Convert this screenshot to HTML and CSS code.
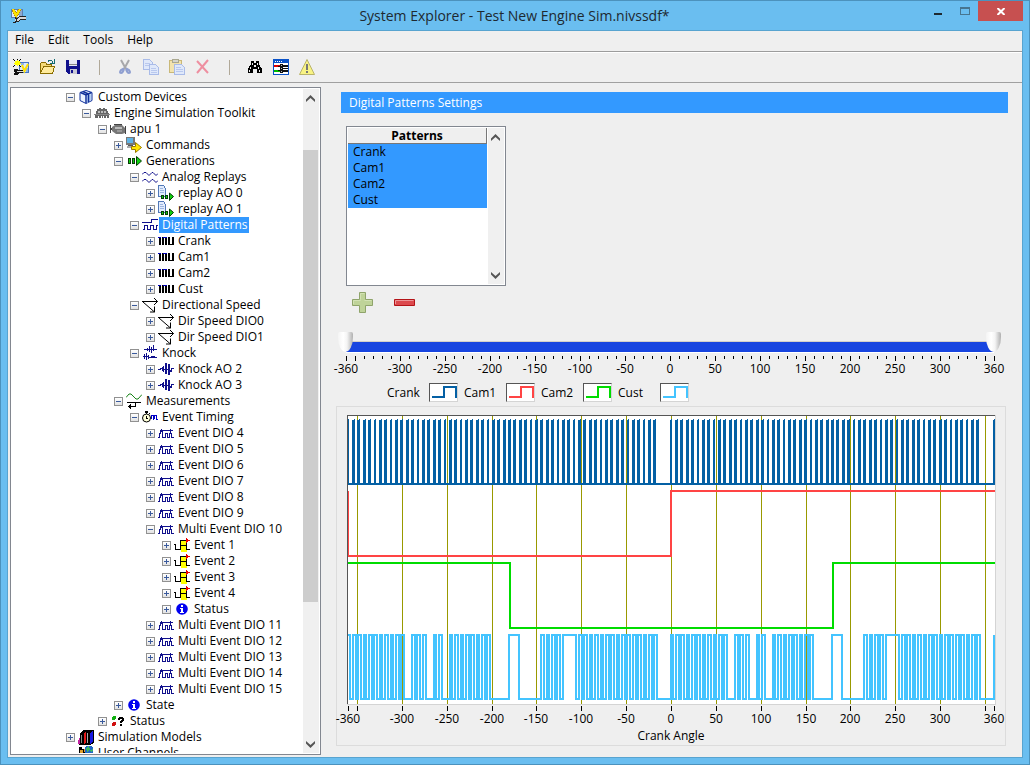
FILE: index.html
```html
<!DOCTYPE html>
<html lang="en">
<head>
<meta charset="utf-8">
<title>System Explorer - Test New Engine Sim.nivssdf*</title>
<link rel="stylesheet" href="styles.css">
</head>
<body>
<svg class="defs" aria-hidden="true">
  <symbol id="i-app" viewBox="0 0 16 16"><path fill="#5b7fb5" d="M1 1h12v9H1z"/><path fill="#dfe7f2" d="M2 2h10v7H2z"/><path fill="#8ea9cf" d="M9 2h3v7H9z"/><path fill="none" stroke="#b08a10" stroke-width="3" d="M3 1l3 7 4-7"/><path fill="none" stroke="#ffe100" stroke-width="2" d="M3 1l3 7 4-7"/><path fill="none" stroke="#222" stroke-width="4" d="M5 12h3l2-2h6"/><path fill="none" stroke="#d8d8d8" stroke-width="2" d="M5 12h3l2-2h6"/><path fill="none" stroke="#222" d="M5 9l2 2-1 3-3 1"/></symbol>
  <symbol id="i-new" viewBox="0 0 16 16"><path fill="#4a76c4" d="M6 3h10v11H6z"/><path fill="#dce9fb" d="M7 4h8v9H7z"/><path fill="#8fb3ea" d="M8 4h3v2H8zM13 9h2v4h-2z"/><path fill="none" stroke="#ffe100" stroke-width="2" shape-rendering="auto" d="M9 6l2.500 6L15 5"/><path d="M0 0h1v1H0zM1 1h1v1H1zM7 0h1v1H7zM6 1h1v1H6zM0 7h1v1H0zM1 6h1v1H1zM7 7h1v1H7zM6 6h1v1H6zM4 0h1v1H4z"/><path fill="#ff0" d="M2 2h5v4H2zM4 1h1v6H4zM1 4h7v1H1z"/><path fill="none" stroke="#111" stroke-width="3" d="M1 11h2l2 1h5M1 15h2l2-2"/><path fill="none" stroke="#ddd" d="M4 12.500h6"/></symbol>
  <symbol id="i-open" viewBox="0 0 16 16"><path fill="#f4da78" stroke="#8a6d00" d="M1.500 13.500V4.500l1-1h4l1 1.500h5v8.500z"/><path fill="#ffeb9c" stroke="#8a6d00" d="M1.500 14.500l3-7h11l-2 7z"/><path fill="none" stroke="#146b73" d="M9 2.500q3-3 5 1M15.500 0v4.500H11"/></symbol>
  <symbol id="i-save" viewBox="0 0 16 16"><path fill="#10108c" d="M1 1h14v14H3l-2-2z"/><path fill="#e8e8f4" d="M4 1h8v6H4z"/><path fill="#888" d="M4 5h8v1H4z"/><path fill="#c8c8d4" d="M5 10h7v5H5z"/><path fill="#10108c" d="M6 11h2v3H6z"/></symbol>
  <symbol id="i-cut" viewBox="0 0 16 16"><g fill="none" shape-rendering="auto"><path stroke="#a7a7aa" stroke-width="2" d="M4 1l5 9M12 1L7 10"/><path stroke="#8f9fd0" stroke-width="2" d="M7 9.500L4 11q-2 3 0 3t3-4M9 9.500l3 1.500q2 3 0 3t-3-4"/></g></symbol>
  <symbol id="i-copy" viewBox="0 0 16 16"><g fill="#dfe8fa" stroke="#a9bbe8"><path d="M.5.500h6l3 3v7h-9z"/><path d="M6.500 5.500h6l3 3v7h-9z"/></g><path stroke="#b9c8ee" d="M2 4.500h5M2 6.500h4M8 9.500h5M8 11.500h6M8 13.500h6"/></symbol>
  <symbol id="i-paste" viewBox="0 0 16 16"><rect x=".5" y="1.500" width="12" height="12" rx="1" fill="#f2e3ae" stroke="#c9b878"/><path fill="#d5d5cc" stroke="#aaa890" d="M3.500.500h6v3h-6z"/><path fill="#dfe8fa" stroke="#a9bbe8" d="M5.500 5.500h7l3 3v7h-10z"/><path stroke="#b9c8ee" d="M7 8.500h5M7 10.500h7M7 12.500h7"/></symbol>
  <symbol id="i-delete" viewBox="0 0 16 16"><path stroke="#ee8fa0" stroke-width="2" shape-rendering="auto" d="M2 2l11 12M13 1L2 14"/></symbol>
  <symbol id="i-find" viewBox="0 0 16 16"><path d="M4 2h3v2h2V2h3v3l3 5v4h-5v-4H6v4H1v-4l3-5z"/><path fill="#efefef" d="M5 4h1v2H5zM10 4h1v2h-1zM3 8h1v2H3zM11 8h1v2h-1zM2 11h1v2H2zM12 11h1v2h-1zM7 6h2v2H7z"/></symbol>
  <symbol id="i-map" viewBox="0 0 16 16"><path fill="#0a52c8" d="M0 0h16v16H0z"/><path fill="#fff" d="M1 4h14v11H1zM2 2h1v1H2zM4 2h1v1H4zM6 2h1v1H6zM8 2h1v1H8z"/><path fill="#d00" d="M1 6h6v2H1z"/><path fill="#0b0" d="M1 11h6v2H1z"/><path fill="#111" d="M7 5h3v1h5v2h-5v1h5v1h-5v1h5v2h-5v1H7v-2H5v-1h2V8H5V7h2z"/><path fill="#bbb" d="M8 6h1v1H8zM8 9h1v1H8zM8 12h1v1H8z"/></symbol>
  <symbol id="i-warn" viewBox="0 0 16 16"><path fill="#f8f383" stroke="#b9b36a" stroke-linejoin="round" shape-rendering="auto" d="M8 .500L15.500 15.500H.500z"/><path fill="#777" d="M7 5h2v6H7zM7 12h2v2H7z"/></symbol>

  <symbol id="i-cube" viewBox="0 0 16 16"><g shape-rendering="auto"><path fill="#eaf2ff" stroke="#10309a" d="M8 1.500l6 2v8L8 14.500l-6-3v-8z"/><path fill="#b4d0f4" d="M9 7l4-2v6l-4 3z"/><path fill="none" stroke="#10309a" stroke-width="1.500" d="M2.500 3.500L8 6l5.500-2.500M8 6v8M5 2.500l5.500 2.500v8"/></g></symbol>
  <symbol id="i-engine" viewBox="0 0 16 16"><path fill="#666" d="M3 4h2V3h2v1h2V3h2v1h2v2h1v2h1v5h-2v-2h-1v2h-2v-2h-1v2H8v-2H7v2H5v-2H4v2H1V9h1V6h1z"/><path fill="#bbb" d="M4 6h2v2H4zM7 6h2v2H7zM10 6h2v2h-2z"/><path fill="#888" d="M0 9h16v1H0z"/></symbol>
  <symbol id="i-motor" viewBox="0 0 16 16"><path fill="#444" d="M0 4h1v8H0zM1 7h2v2H1zM4 3h8v1H4zM15 5h1v8h-1z"/><path fill="#777" shape-rendering="auto" d="M2 6l3-2h7l3 3v5l-3 1H6l-4-3z"/><path fill="#bbb" d="M5 6h7v2H5z"/><path fill="#999" d="M7 9h5v2H7z"/></symbol>
  <symbol id="i-cmd" viewBox="0 0 16 16"><path fill="#777" d="M0 0h9v8H0z"/><path fill="#5fb4e6" d="M1 1h6v5H1z"/><path fill="#555" d="M2 8h5v1H2z"/><path fill="#aaa" d="M1 9h5v2H1z"/><path fill="#ffe600" stroke="#9a7a00" shape-rendering="auto" d="M5.500 9.500h4V5.500l6 5-6 5v-3h-4z"/></symbol>
  <symbol id="i-gen" viewBox="0 0 16 16"><g fill="#10d010" stroke="#063c06"><path d="M2.500 5.500h2v5h-2zM6.500 5.500h2v5h-2z"/><path shape-rendering="auto" d="M10.500 3.500l5 4.500-5 4.500z"/></g></symbol>
  <symbol id="i-analog" viewBox="0 0 16 16"><path fill="none" stroke="#10108c" shape-rendering="auto" d="M0 5.500l2-2h2l3 3 3-3h1l3 3 2-2M0 12.500l2-2h2l3 3 3-3h1l3 3 2-2"/></symbol>
  <symbol id="i-replay" viewBox="0 0 16 16"><path fill="#e2ecfc" stroke="#5078b8" d="M.5.500h5l2 3v8h-7z"/><path stroke="#9cb6e0" d="M2 3.500h3M2 5.500h4M2 7.500h4"/><g fill="#10d010" stroke="#063c06"><path d="M3.500 10.500h2v3h-2zM7.500 10.500h2v3h-2z"/><path shape-rendering="auto" d="M11.500 8l4 3.500-4 4z"/></g></symbol>
  <symbol id="i-digital" viewBox="0 0 16 16"><path fill="none" stroke="#10108c" d="M0 5.500h9.500v-3H16M1 12.500h1.500v-4h3v4h3v-4h3v4h3v-4H16"/></symbol>
  <symbol id="i-wave" viewBox="0 0 16 16"><path d="M0 4h3v8H1V5H0zM4 4h5v8H7V5H6v7H4zM10 4h2v7h2V4h2v8h-6z"/><path fill="#0000b8" d="M0 4h3v1H0zM5 4h4v1H5z"/></symbol>
  <symbol id="i-dir" viewBox="0 0 16 16"><g fill="none" stroke="#000" shape-rendering="auto"><path d="M0 4.500h15.500M12 1l3.500 3.500L12 8M1 5l11.500 10"/><path d="M12.500 9.500v5.500H8"/></g></symbol>
  <symbol id="i-knocks" viewBox="0 0 16 16"><path fill="#10108c" d="M2 4h13v1H2zM5 3h1v3H5zM7 1h1v6H7zM9 2h1v6H9zM11 0h1v6h-1zM1 11h6v1H1zM2 9h1v5H2zM4 8h1v7H4zM6 10h1v4H6zM7 12h8v1H7zM9 11h4v1H9z"/></symbol>
  <symbol id="i-knock" viewBox="0 0 16 16"><path fill="#10108c" d="M0 8h3v1H0zM2 7h2v1H2zM4 6h1v4H4zM5 5h1v6H5zM6 8h6v1H6zM7 2h2v11H7zM10 3h2v11h-2zM12 9h2v2h-2zM13 7h1v3h-1zM14 7h2v1h-2z"/></symbol>
  <symbol id="i-meas" viewBox="0 0 16 16"><path fill="none" stroke="#178217" shape-rendering="auto" d="M0 4.500l3-3.500h2l5 5h2l4-4.500"/><path fill="none" stroke="#000" d="M1 9.500h14M9.500 9v4.500H2"/><path d="M2 13h1v1H2zM3 12h1v3H3zM4 11h1v5H4z"/></symbol>
  <symbol id="i-timing" viewBox="0 0 16 16"><circle cx="4.500" cy="9" r="4" fill="#ffffd8" stroke="#000" shape-rendering="auto"/><path d="M3 2h3v2H3zM4 4h1v1H4zM4 7h1v3H4zM5 9h1v1H5zM7 4h1v1H7z"/><path fill="none" stroke="#0000c8" d="M9.500 10V6.500h2v4M12.500 10V6.500h2v4H16"/></symbol>
  <symbol id="i-event" viewBox="0 0 16 16"><path fill="none" stroke="#10108c" d="M0 12.500h1.500v-4h1v-3M2 5.500h13M4.500 6v6.500h2.500M7.500 13V8.500h2v4h2M11.500 13V8.500h1V5M13.500 8v4.500H16"/><path fill="#10108c" d="M3 4h1v3H3zM12 4h1v3h-1z"/></symbol>
  <symbol id="i-yellow" viewBox="0 0 16 16"><path fill="#ff0" d="M7 3h6v12H7z"/><path fill="none" stroke="#000" d="M0 7.500h1.500v5h5V3M6 3.500h8M6 8.500h7M12.500 4v8.500H16"/><path fill="#e00" d="M12 1l4 2.500L12 6z"/></symbol>
  <symbol id="i-info" viewBox="0 0 16 16"><circle cx="8" cy="8" r="5.800" fill="#0000f0" shape-rendering="auto"/><path fill="#fff" d="M7 4h2v2H7zM6 7h3v4h1v1H6v-1h1V8H6z"/></symbol>
  <symbol id="i-status" viewBox="0 0 16 16"><circle cx="4" cy="5" r="2" fill="#10b010"/><circle cx="4" cy="11" r="2" fill="#d01010"/><path d="M9 4h4v1h1v3h-1v1h-1v1h-2V8h1V7h1V6h-2v1H8V5h1zM10 11h2v2h-2z"/></symbol>
  <symbol id="i-books" viewBox="0 0 16 16"><path d="M2 5l3-4h11v13l-4 2H1z"/><path fill="#c020a0" d="M0 12l2-4v7H0z"/><path fill="#888" d="M3 6h1v8H3z"/><path fill="#e01818" d="M6 5l2-3v11l-2 2z"/><path fill="#aaa" d="M9 4h1v10H9z"/><path fill="#1818e0" d="M12 4l3-3v12l-3 2z"/></symbol>
  <symbol id="i-channels" viewBox="0 0 16 16"><path d="M1 2h3v2h4V2h2v7H1z"/><path fill="#e0a030" d="M2 5h3v3H2zM6 4h3v3H6z"/><circle cx="11" cy="5" r="4.500" fill="#2068c8"/><path fill="#40b860" d="M8 3l3-2 1 3-3 3zM12 5l3-1-1 4z"/></symbol>
  <symbol id="c-up" viewBox="0 0 9 7"><path fill="#555" d="M4.500 0L9 4.500V7L4.500 3 0 7V4.500z"/></symbol>
  <symbol id="c-down" viewBox="0 0 9 7"><path fill="#555" d="M4.500 7L0 2.500V0l4.500 4L9 0v2.500z"/></symbol>
</svg>

<div class="window">
  <header class="titlebar">
    <svg class="icon"><use href="#i-app"/></svg>
    <h1 class="title">System Explorer - Test New Engine Sim.nivssdf*</h1>
    <div class="caption-buttons">
      <button class="cap" aria-label="Minimize"><svg width="8" height="9"><path fill="#1e2930" d="M0 6h8v2H0z"/></svg></button>
      <button class="cap" aria-label="Maximize"><svg width="10" height="9"><path fill="#47758f" fill-rule="evenodd" d="M0 0h10v8H0zM1 2v5h8V2z"/></svg></button>
      <button class="cap cap-close" aria-label="Close"><svg width="8" height="7"><path stroke="#fff" stroke-width="2" d="M.5 0l7 7M7.500 0l-7 7"/></svg></button>
    </div>
  </header>

  <div class="client">
    <nav class="menubar">
      <button>File</button><button>Edit</button><button>Tools</button><button>Help</button>
    </nav>
    <div class="toolbar">
      <button aria-label="New"><svg class="icon"><use href="#i-new"/></svg></button>
      <button aria-label="Open"><svg class="icon"><use href="#i-open"/></svg></button>
      <button aria-label="Save"><svg class="icon"><use href="#i-save"/></svg></button>
      <span class="sep"></span>
      <button aria-label="Cut"><svg class="icon"><use href="#i-cut"/></svg></button>
      <button aria-label="Copy"><svg class="icon"><use href="#i-copy"/></svg></button>
      <button aria-label="Paste"><svg class="icon"><use href="#i-paste"/></svg></button>
      <button aria-label="Delete"><svg class="icon"><use href="#i-delete"/></svg></button>
      <span class="sep"></span>
      <button aria-label="Find"><svg class="icon"><use href="#i-find"/></svg></button>
      <button aria-label="Mappings"><svg class="icon"><use href="#i-map"/></svg></button>
      <button aria-label="Warnings"><svg class="icon"><use href="#i-warn"/></svg></button>
    </div>

    <div class="content">
      <aside class="tree-box">
        <ul class="tree">
          <li><div class="row"><button class="tog" aria-label="Collapse"></button><svg class="icon"><use href="#i-cube"/></svg><span>Custom Devices</span></div>
            <ul><li><div class="row"><button class="tog" aria-label="Collapse"></button><svg class="icon"><use href="#i-engine"/></svg><span>Engine Simulation Toolkit</span></div>
              <ul>
                <li><div class="row"><button class="tog" aria-label="Collapse"></button><svg class="icon"><use href="#i-motor"/></svg><span>apu 1</span></div>
                  <ul>
                    <li><div class="row"><button class="tog plus" aria-label="Expand"></button><svg class="icon"><use href="#i-cmd"/></svg><span>Commands</span></div></li>
                    <li><div class="row"><button class="tog" aria-label="Collapse"></button><svg class="icon"><use href="#i-gen"/></svg><span>Generations</span></div>
                      <ul>
                        <li><div class="row"><button class="tog" aria-label="Collapse"></button><svg class="icon"><use href="#i-analog"/></svg><span>Analog Replays</span></div>
                          <ul>
                            <li><div class="row"><button class="tog plus" aria-label="Expand"></button><svg class="icon"><use href="#i-replay"/></svg><span>replay AO 0</span></div></li>
                            <li><div class="row"><button class="tog plus" aria-label="Expand"></button><svg class="icon"><use href="#i-replay"/></svg><span>replay AO 1</span></div></li>
                          </ul></li>
                        <li><div class="row selected"><button class="tog" aria-label="Collapse"></button><svg class="icon"><use href="#i-digital"/></svg><span>Digital Patterns</span></div>
                          <ul>
                            <li><div class="row"><button class="tog plus" aria-label="Expand"></button><svg class="icon"><use href="#i-wave"/></svg><span>Crank</span></div></li>
                            <li><div class="row"><button class="tog plus" aria-label="Expand"></button><svg class="icon"><use href="#i-wave"/></svg><span>Cam1</span></div></li>
                            <li><div class="row"><button class="tog plus" aria-label="Expand"></button><svg class="icon"><use href="#i-wave"/></svg><span>Cam2</span></div></li>
                            <li><div class="row"><button class="tog plus" aria-label="Expand"></button><svg class="icon"><use href="#i-wave"/></svg><span>Cust</span></div></li>
                          </ul></li>
                        <li><div class="row"><button class="tog" aria-label="Collapse"></button><svg class="icon"><use href="#i-dir"/></svg><span>Directional Speed</span></div>
                          <ul>
                            <li><div class="row"><button class="tog plus" aria-label="Expand"></button><svg class="icon"><use href="#i-dir"/></svg><span>Dir Speed DIO0</span></div></li>
                            <li><div class="row"><button class="tog plus" aria-label="Expand"></button><svg class="icon"><use href="#i-dir"/></svg><span>Dir Speed DIO1</span></div></li>
                          </ul></li>
                        <li><div class="row"><button class="tog" aria-label="Collapse"></button><svg class="icon"><use href="#i-knocks"/></svg><span>Knock</span></div>
                          <ul>
                            <li><div class="row"><button class="tog plus" aria-label="Expand"></button><svg class="icon"><use href="#i-knock"/></svg><span>Knock AO 2</span></div></li>
                            <li><div class="row"><button class="tog plus" aria-label="Expand"></button><svg class="icon"><use href="#i-knock"/></svg><span>Knock AO 3</span></div></li>
                          </ul></li>
                      </ul></li>
                    <li><div class="row"><button class="tog" aria-label="Collapse"></button><svg class="icon"><use href="#i-meas"/></svg><span>Measurements</span></div>
                      <ul>
                        <li><div class="row"><button class="tog" aria-label="Collapse"></button><svg class="icon"><use href="#i-timing"/></svg><span>Event Timing</span></div>
                          <ul>
                            <li><div class="row"><button class="tog plus" aria-label="Expand"></button><svg class="icon"><use href="#i-event"/></svg><span>Event DIO 4</span></div></li>
                            <li><div class="row"><button class="tog plus" aria-label="Expand"></button><svg class="icon"><use href="#i-event"/></svg><span>Event DIO 5</span></div></li>
                            <li><div class="row"><button class="tog plus" aria-label="Expand"></button><svg class="icon"><use href="#i-event"/></svg><span>Event DIO 6</span></div></li>
                            <li><div class="row"><button class="tog plus" aria-label="Expand"></button><svg class="icon"><use href="#i-event"/></svg><span>Event DIO 7</span></div></li>
                            <li><div class="row"><button class="tog plus" aria-label="Expand"></button><svg class="icon"><use href="#i-event"/></svg><span>Event DIO 8</span></div></li>
                            <li><div class="row"><button class="tog plus" aria-label="Expand"></button><svg class="icon"><use href="#i-event"/></svg><span>Event DIO 9</span></div></li>
                            <li><div class="row"><button class="tog" aria-label="Collapse"></button><svg class="icon"><use href="#i-event"/></svg><span>Multi Event DIO 10</span></div>
                              <ul>
                                <li><div class="row"><button class="tog plus" aria-label="Expand"></button><svg class="icon"><use href="#i-yellow"/></svg><span>Event 1</span></div></li>
                                <li><div class="row"><button class="tog plus" aria-label="Expand"></button><svg class="icon"><use href="#i-yellow"/></svg><span>Event 2</span></div></li>
                                <li><div class="row"><button class="tog plus" aria-label="Expand"></button><svg class="icon"><use href="#i-yellow"/></svg><span>Event 3</span></div></li>
                                <li><div class="row"><button class="tog plus" aria-label="Expand"></button><svg class="icon"><use href="#i-yellow"/></svg><span>Event 4</span></div></li>
                                <li><div class="row"><button class="tog plus" aria-label="Expand"></button><svg class="icon"><use href="#i-info"/></svg><span>Status</span></div></li>
                              </ul></li>
                            <li><div class="row"><button class="tog plus" aria-label="Expand"></button><svg class="icon"><use href="#i-event"/></svg><span>Multi Event DIO 11</span></div></li>
                            <li><div class="row"><button class="tog plus" aria-label="Expand"></button><svg class="icon"><use href="#i-event"/></svg><span>Multi Event DIO 12</span></div></li>
                            <li><div class="row"><button class="tog plus" aria-label="Expand"></button><svg class="icon"><use href="#i-event"/></svg><span>Multi Event DIO 13</span></div></li>
                            <li><div class="row"><button class="tog plus" aria-label="Expand"></button><svg class="icon"><use href="#i-event"/></svg><span>Multi Event DIO 14</span></div></li>
                            <li><div class="row"><button class="tog plus" aria-label="Expand"></button><svg class="icon"><use href="#i-event"/></svg><span>Multi Event DIO 15</span></div></li>
                          </ul></li>
                      </ul></li>
                    <li><div class="row"><button class="tog plus" aria-label="Expand"></button><svg class="icon"><use href="#i-info"/></svg><span>State</span></div></li>
                  </ul></li>
                <li><div class="row"><button class="tog plus" aria-label="Expand"></button><svg class="icon"><use href="#i-status"/></svg><span>Status</span></div></li>
              </ul></li></ul></li>
          <li><div class="row"><button class="tog plus" aria-label="Expand"></button><svg class="icon"><use href="#i-books"/></svg><span>Simulation Models</span></div></li>
          <li><div class="row leaf"><svg class="icon"><use href="#i-channels"/></svg><span>User Channels</span></div></li>
        </ul>
        <div class="scrollbar">
          <button aria-label="Scroll up"><svg class="chev"><use href="#c-up"/></svg></button>
          <div class="track"><div class="thumb"></div></div>
          <button aria-label="Scroll down"><svg class="chev"><use href="#c-down"/></svg></button>
        </div>
      </aside>

      <main class="panel">
        <h2 class="band">Digital Patterns Settings</h2>
        <div class="patterns">
          <table>
            <thead><tr><th scope="col">Patterns</th></tr></thead>
            <tbody><tr><td>Crank</td></tr><tr><td>Cam1</td></tr><tr><td>Cam2</td></tr><tr><td>Cust</td></tr></tbody>
          </table>
          <div class="scrollbar">
            <button aria-label="Scroll up"><svg class="chev"><use href="#c-up"/></svg></button>
            <div class="track"></div>
            <button aria-label="Scroll down"><svg class="chev"><use href="#c-down"/></svg></button>
          </div>
        </div>
        <div class="edit-buttons">
          <button aria-label="Add pattern"><svg width="22" height="22"><path fill="#bfd399" stroke="#8fa46b" d="M7.500.500h6v7h7v6h-7v7h-6v-7h-7v-6h7z"/><path fill="none" stroke="#d3e2b4" d="M8.500 7.500v-6h4M1.500 12V8.500h7M12.500 8.500h7"/></svg></button>
          <button aria-label="Remove pattern"><svg width="22" height="22"><path fill="#dc4a4e" stroke="#b41418" d="M.5 7.500h20v6H.500z"/><path fill="none" stroke="#ee9698" d="M1.500 12V8.500h18"/></svg></button>
        </div>
        <div class="range">
          <div class="rail"></div>
          <input type="range" min="-360" max="360" value="-360" aria-label="Range start">
          <input type="range" min="-360" max="360" value="360" aria-label="Range end">
        </div>
        <svg class="scale" id="scale"></svg>
        <ul class="legend">
          <li><span>Crank</span><svg class="crank" width="29" height="19"><path d="M2 13h12V3h12v11"/></svg></li>
          <li><span>Cam1</span><svg class="cam1" width="29" height="19"><path d="M2 13h12V3h12v11"/></svg></li>
          <li><span>Cam2</span><svg class="cam2" width="29" height="19"><path d="M2 13h12V3h12v11"/></svg></li>
          <li><span>Cust</span><svg class="cust" width="29" height="19"><path d="M2 13h12V3h12v11"/></svg></li>
        </ul>
        <div class="graph"><svg id="graph" role="img" aria-label="Digital patterns by crank angle"></svg></div>
      </main>
    </div>
  </div>
</div>
<script src="app.js"></script>
</body>
</html>
```
FILE: styles.css
```css
* { box-sizing: border-box; }
body { margin: 0; font-family: "Open Sans", "Noto Sans", sans-serif; font-size: 12px; line-height: 16px; color: #000; }
button { margin: 0; padding: 0; border: 0; background: none; font: inherit; color: inherit; display: flex; align-items: center; justify-content: center; }
ul { list-style: none; margin: 0; padding: 0; }
svg { display: block; flex: none; }
.defs { position: absolute; width: 0; height: 0; }
.icon { width: 16px; height: 16px; shape-rendering: crispEdges; }

.window { height: 100vh; display: flex; flex-direction: column; background: #6abef0; border: 1px solid #4c92bd; padding: 0 6px 6px; }
.titlebar { height: 29px; flex: none; display: grid; grid-template-columns: 106px 1fr 110px; align-items: center; padding-left: 3px; }
.title { margin: 0; font-size: 14px; font-weight: 400; line-height: 20px; text-align: center; color: #1e2930; }
.caption-buttons { display: flex; justify-content: flex-end; align-self: start; }
.cap { width: 27px; height: 20px; }
.cap-close { width: 45px; background: #c75050; }

.client { flex: 1; min-height: 0; display: flex; flex-direction: column; background: #efefef; border: 1px solid #58a4d0; }
.menubar { height: 21px; flex: none; display: flex; border-bottom: 1px solid #9c9c9c; }
.menubar button { padding: 0 7px 2px; }
.toolbar { height: 31px; flex: none; display: flex; padding-bottom: 1px; border-top: 1px solid #fff; border-bottom: 1px solid #a0a0a0; }
.toolbar button, .toolbar .sep { width: 26px; }
.toolbar .sep { display: flex; justify-content: center; align-items: center; }
.toolbar .sep::before { content: ""; width: 1px; height: 15px; background: #b0a898; }

.content { flex: 1; min-height: 0; display: grid; grid-template-columns: 311px minmax(0, 1fr); gap: 15px; padding: 4px 16px 2px 2px; }
.tree-box { min-height: 0; display: flex; background: #fff; border: 1px solid #828790; padding: 1px; }
.tree { flex: 1; min-width: 0; overflow: hidden; padding-left: 54px; }
.tree ul { padding-left: 16px; }
.row { display: flex; align-items: center; height: 16px; white-space: nowrap; }
.row .icon { margin: 0 1px 0 3px; }
.row.leaf { padding-left: 9px; }
.row span { padding: 0 1px 0 3px; }
.selected span { background: #3399ff; color: #fff; }
.tog { width: 9px; height: 9px; flex: none; border: 1px solid #919191; background: linear-gradient(#3a5a9c, #3a5a9c) center / 5px 1px no-repeat, linear-gradient(#fff, #e2e2e2); }
.tog.plus { background: linear-gradient(#3a5a9c, #3a5a9c) center / 5px 1px no-repeat, linear-gradient(#3a5a9c, #3a5a9c) center / 1px 5px no-repeat, linear-gradient(#fff, #e2e2e2); }

.scrollbar { width: 16px; flex: none; display: flex; flex-direction: column; background: #f0f0f0; }
.scrollbar button { height: 18px; padding-right: 1px; }
.chev { width: 9px; height: 7px; }
.track { flex: 1; display: flex; flex-direction: column; }
.thumb { height: 72%; margin: 43px 1px 0 0; background: #cdcdcd; }

.panel { min-width: 0; min-height: 0; display: flex; flex-direction: column; padding: 5px 0 9px; }
.band { margin: 0 -2px 13px 5px; padding: 3px 8px 2px; background: #3399ff; color: #fff; font-size: 12px; font-weight: 400; }
.patterns { width: 160px; height: 160px; margin-left: 10px; display: flex; justify-content: space-between; align-items: stretch; background: #fff; border: 1px solid #828790; padding: 1px; }
.patterns table { width: 139px; align-self: flex-start; border-collapse: separate; border-spacing: 0; }
.patterns th { height: 16px; padding: 0; background: #efefef; border-right: 1px solid #777; border-bottom: 1px solid #777; line-height: 15px; font-weight: 700; }
.patterns td { height: 16px; padding: 0 5px; background: #3399ff; line-height: 16px; }
.edit-buttons { display: flex; gap: 20px; padding: 6px 16px 0; }

.range { display: grid; align-items: start; margin: 18px 5px 0 2px; height: 21px; }
.range > * { grid-area: 1 / 1; }
.rail { align-self: end; height: 12px; margin: 0 7px 0 8px; background: #1845e0; border-top: 1px solid #d4d0c8; border-bottom: 1px solid #fff; }
.range input { appearance: none; width: 100%; height: 20px; margin: 0; background: none; pointer-events: none; }
.range input::-webkit-slider-thumb { appearance: none; pointer-events: auto; width: 15px; height: 20px; border-radius: 2px 2px 8px 8px / 2px 2px 16px 16px; background: linear-gradient(90deg, #f4f4f4, #fff 35%, #f4f4f4 60%, #b0b0b0); }
.scale { width: 100%; height: 30px; overflow: visible; }
.legend { display: flex; gap: 6px; padding-left: 51px; }
.legend li { display: grid; grid-template-columns: 42px 29px; align-items: center; }
.legend svg { background: #fff; border: 1px solid; border-color: #555 #d4d4d4 #d4d4d4 #555; }
.legend path { fill: none; stroke-width: 2; shape-rendering: crispEdges; }
.graph { flex: 1; min-height: 0; margin-top: 4px; border: 1px solid #dcdcdc; }
#graph { width: 100%; height: 100%; overflow: visible; }
#graph path, #graph rect, #scale path { shape-rendering: crispEdges; }
#graph path { fill: none; stroke-width: 2; }
#graph .grid, #graph .ticks, #graph .edge-dark, #graph .edge-light, #scale path { stroke-width: 1; }
#graph .grid { stroke: #999900; }
#graph .ticks, #scale path { stroke: #000; }
#graph .edge-dark { stroke: #555; }
#graph .edge-light { stroke: #d4d4d4; }
#graph .plot { fill: #fff; }
#graph .bars { fill: #0460a4; stroke: none; }
#graph text, #scale text { font-size: 12px; text-anchor: middle; }
.crank { stroke: #0460a4; }
.cam1 { stroke: #ff4444; }
.cam2 { stroke: #00dc00; }
.cust { stroke: #44c4ff; }
```
FILE: app.js
```js
const majors = [-360, -350];
for (let a = -300; a <= 300; a += 50) majors.push(a);
majors.push(350, 360);

const labelled = majors.filter(a => Math.abs(a) !== 350);

function labels(toX, y) {
  return labelled.map(a => `<text x="${Math.round(toX(a))}" y="${y}">${a}</text>`).join("");
}

function drawScale() {
  const svg = document.getElementById("scale");
  const k = (svg.getBoundingClientRect().width - 22) / 720;
  const toX = a => 10 + (a + 360) * k;
  let d = "";
  for (let a = -360; a <= 360; a += 10) {
    d += `M${Math.round(toX(a)) + 0.5} 3v${majors.includes(a) ? 5 : 3}`;
  }
  svg.innerHTML = `<path d="${d}"/>` + labels(toX, 20);
}

// Custom pattern: the angles, within one turn, at which the level flips.
function customEdges() {
  const runs = [[1, 21], [24, 29], [32, 35], [38, 53]];
  const late = [[72, 80], [85, 115]];
  const steps = ([from, to]) => Array.from({ length: to - from + 1 }, (_, i) => 3 * (from + i));
  return [...runs.flatMap(steps), 180, 191, ...late.flatMap(steps)];
}

function drawGraph() {
  const svg = document.getElementById("graph");
  const box = svg.getBoundingClientRect();
  const W = Math.round(box.width), H = Math.round(box.height);
  const left = 10, top = 8, right = W - 10, bottom = H - 41;
  const k = (W - 22) / 720;
  const toX = a => 11 + (a + 360) * k;
  const lane = (bottom - top - 1) / 4;
  const hi = i => Math.round(top + 4 + lane * i);
  const lo = i => Math.floor(hi(i) + lane * 0.9);

  let grid = "", ticks = "";
  for (const a of majors) {
    const x = Math.round(toX(a)) + 0.5;
    if (Math.abs(a) !== 360) grid += `M${x} ${top + 1}V${bottom}`;
    ticks += `M${x} ${bottom + 2}v5`;
  }

  let bars = "";
  for (let n = 0; n <= 120; n++) {
    if (n % 60 > 57) continue;
    const c = toX(-360 + n * 6);
    const x1 = Math.max(Math.floor(c - 0.9), left + 1);
    const x2 = Math.min(Math.ceil(c + 0.9), right);
    bars += `M${x1} ${hi(0) + 1}H${x2 - 1}v-1H${x2}V${lo(0)}H${x1}z`;
  }

  let cust = `M${left + 1} ${hi(3)}`;
  let level = true;
  const turn = customEdges();
  for (const a of [...turn, 360, ...turn.map(e => e + 360), 720]) {
    level = !level;
    cust += `H${Math.floor(toX(a - 360))}V${level ? hi(3) : lo(3)}`;
  }

  const x0 = toX(0), xm = Math.floor(toX(-180)) + 1, xp = Math.floor(toX(180)) + 1;
  svg.innerHTML = `
    <rect class="plot" x="${left}" y="${top}" width="${right - left}" height="${bottom - top}"/>
    <path class="grid" d="${grid}"/>
    <path class="bars" d="${bars}"/>
    <path class="crank" d="M${left + 1} ${lo(0) + 1}H${right}"/>
    <path class="cam1" d="M${left + 1} ${hi(1)}V${lo(1) + 1}H${x0}V${hi(1)}H${right}"/>
    <path class="cam2" d="M${left + 1} ${hi(2)}H${xm}V${lo(2) + 1}H${xp}V${hi(2)}H${right}"/>
    <path class="cust" d="${cust}"/>
    <path class="edge-dark" d="M${left + 0.5} ${bottom}V${top + 0.5}H${right}"/>
    <path class="edge-light" d="M${left} ${bottom + 0.5}H${right + 0.5}V${top}"/>
    <path class="ticks" d="${ticks}"/>
    ${labels(toX, bottom + 19)}
    <text x="${Math.round(x0)}" y="${bottom + 36}">Crank Angle</text>`;
}

function draw() {
  drawScale();
  drawGraph();
}

window.addEventListener("resize", draw);
draw();
```
